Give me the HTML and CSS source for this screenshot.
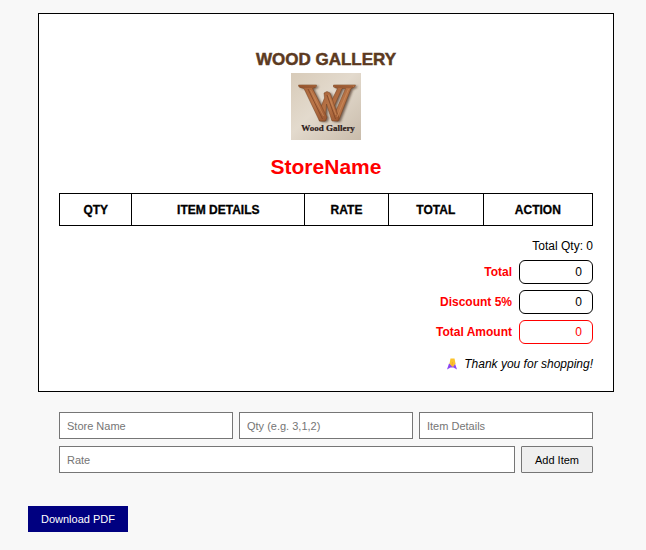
FILE: index.html
```html
<!DOCTYPE html>
<html lang="en">
<head>
<meta charset="utf-8">
<meta name="viewport" content="width=device-width, initial-scale=1">
<title>Wood Gallery</title>
<link rel="stylesheet" href="styles.css">
</head>
<body>
<main class="page">
  <section class="invoice">
    <header class="brand">
      <h1 class="brand-name">WOOD GALLERY</h1>
      <svg class="logo" viewBox="0 0 70 67" role="img" aria-label="Wood Gallery logo">
        <defs>
          <linearGradient id="wall" x1="0" y1="0" x2="1" y2="1">
            <stop offset="0" stop-color="#d8cbb9"/>
            <stop offset="0.45" stop-color="#e3dacd"/>
            <stop offset="1" stop-color="#c9bcab"/>
          </linearGradient>
          <linearGradient id="wood" x1="0" y1="0" x2="1" y2="1">
            <stop offset="0" stop-color="#a35f36"/>
            <stop offset="0.5" stop-color="#b97548"/>
            <stop offset="1" stop-color="#9a5630"/>
          </linearGradient>
          <filter id="soft" x="-20%" y="-20%" width="140%" height="140%">
            <feGaussianBlur stdDeviation="0.8"/>
          </filter>
          <g id="mark">
            <path d="M42.500 12H64.500L63.500 14L60 15.500L47.500 48L41 47L54.500 15.500H51L41.500 37L39 31L46.500 15.500L42.500 14Z"/>
            <path d="M33 20L36 18.500L39 20L48 45L47 48H41L35.500 31L34 48H28.500L27.500 40L33.500 25Z"/>
            <path d="M7.500 12H25.500L25 14L21.500 15.500L36 44L34.500 48H28.500L13 15.500L8 14Z"/>
          </g>
        </defs>
        <rect width="70" height="67" fill="url(#wall)"/>
        <use href="#mark" transform="translate(2 1)" fill="#4e3526" opacity="0.7" filter="url(#soft)"/>
        <use href="#mark" fill="url(#wood)" stroke="#75411f" stroke-width="0.500"/>
        <path fill="none" stroke="#7d4424" stroke-width="0.800" d="M17 16L31.500 46M36 22L44.500 46M9 14H24M44 14H62"/>
        <path fill="none" stroke="#cf8e5c" stroke-width="0.700" d="M19.500 17L32.500 43M37.500 22L45 42M46 44L57.500 16"/>
        <text class="logo-text" x="37" y="57.500" text-anchor="middle">Wood Gallery</text>
      </svg>
      <h2 class="store-name">StoreName</h2>
    </header>

    <table class="items">
      <colgroup>
        <col class="col-qty"><col class="col-details"><col class="col-rate"><col class="col-total"><col>
      </colgroup>
      <thead>
        <tr><th>QTY</th><th>ITEM DETAILS</th><th>RATE</th><th>TOTAL</th><th>ACTION</th></tr>
      </thead>
    </table>

    <div class="summary">
      <p class="total-qty">Total Qty: <span>0</span></p>
      <div class="sum-row"><label for="total">Total</label><input id="total" class="sum-box" value="0" readonly></div>
      <div class="sum-row"><label for="discount">Discount 5%</label><input id="discount" class="sum-box" value="0" readonly></div>
      <div class="sum-row"><label for="amount">Total Amount</label><input id="amount" class="sum-box sum-box-final" value="0" readonly></div>
      <p class="thanks">
        <svg class="hands" viewBox="0 0 10 12" aria-hidden="true">
          <path fill="#8a45f2" d="M2 5.500L6 7.500L8 5.500L10 11.500L6.500 9.500L3.500 9.500L0 11.500Z"/>
          <path fill="#fcc32c" d="M3.500 0.500H7.500L8.500 5.500L6 9L4.500 8L2.500 5.500Z"/>
          <path fill="#f5a833" d="M5 4H6L5.500 8L4.500 7.500Z"/>
        </svg>
        <span>Thank you for shopping!</span>
      </p>
    </div>
  </section>

  <form class="entry">
    <div class="entry-row">
      <input class="field" type="text" placeholder="Store Name" aria-label="Store Name">
      <input class="field" type="text" placeholder="Qty (e.g. 3,1,2)" aria-label="Qty">
      <input class="field" type="text" placeholder="Item Details" aria-label="Item Details">
    </div>
    <div class="entry-row">
      <input class="field" type="text" placeholder="Rate" aria-label="Rate">
      <button class="add" type="button">Add Item</button>
    </div>
  </form>

  <button class="download" type="button">Download PDF</button>
</main>
</body>
</html>
```
FILE: styles.css
```css
* {
  box-sizing: border-box;
}

body {
  margin: 0;
  background: #f8f8f8;
  color: #000;
  font-family: "Liberation Sans", Arial, sans-serif;
  font-size: 12px;
  line-height: 16px;
}

h1, h2, p {
  margin: 0;
}

input, button {
  font: inherit;
  border-radius: 0;
}

.page {
  padding: 13px 22px 18px 28px;
}

.invoice {
  margin: 0 10px;
  padding: 36px 20px 19px;
  border: 1px solid #000;
  background: #fff;
}

.brand {
  display: flex;
  flex-direction: column;
  align-items: center;
}

.brand-name {
  color: #5c3a21;
  font-size: 17px;
  font-weight: 900;
  line-height: 20px;
  -webkit-text-stroke: 0.5px #5c3a21;
}

.logo {
  display: block;
  width: 70px;
  height: 67px;
  margin-top: 3px;
}

.logo-text {
  fill: #2c1a18;
  stroke: #2c1a18;
  stroke-width: 0.2px;
  font-family: "Liberation Serif", serif;
  font-size: 9px;
  font-weight: bold;
}

.store-name {
  margin: 14px 0;
  color: #f00;
  font-size: 21px;
  line-height: 25px;
}

.items {
  width: 100%;
  table-layout: fixed;
  border-collapse: collapse;
}

.items th {
  height: 32px;
  padding: 0;
  border: 1px solid #000;
  font-size: 12px;
  font-weight: 900;
  line-height: 16px;
}

.col-qty { width: 13.6%; }
.col-details { width: 32.4%; }
.col-rate { width: 15.7%; }
.col-total { width: 17.8%; }

.items th {
  -webkit-text-stroke: 0.3px #000;
}

.summary {
  display: flex;
  flex-direction: column;
  align-items: flex-end;
  gap: 6px;
  padding-top: 12px;
}

.sum-row {
  display: flex;
  align-items: center;
  gap: 7px;
  color: #f00;
  font-weight: bold;
}

.sum-box {
  width: 74px;
  height: 24px;
  padding: 0 10px;
  border: 1px solid #000;
  border-radius: 6px;
  background: #fff;
  color: #000;
  font-weight: normal;
  text-align: right;
}

.sum-box-final {
  border-color: #f00;
  color: #f00;
}

.thanks {
  display: flex;
  align-items: center;
  gap: 7px;
  padding-top: 6px;
  font-style: italic;
}

.hands {
  width: 10px;
  height: 12px;
}

.entry {
  display: flex;
  flex-direction: column;
  gap: 7px;
  margin: 20px 31px 33px;
}

.entry-row {
  display: flex;
  gap: 6px;
}

.field {
  flex: 1;
  min-width: 0;
  height: 27px;
  padding: 0 7px;
  border: 1px solid #767676;
  background: #fff;
  font-size: 11px;
}

.field::placeholder {
  color: #757575;
}

.add {
  width: 72px;
  padding: 0;
  border: 1px solid #767676;
  border-radius: 1px;
  background: #efefef;
  color: #000;
  font-size: 11px;
}

.download {
  height: 26px;
  padding: 0 13px;
  border: 0;
  background: #000080;
  color: #fff;
  font-size: 11px;
}
```
